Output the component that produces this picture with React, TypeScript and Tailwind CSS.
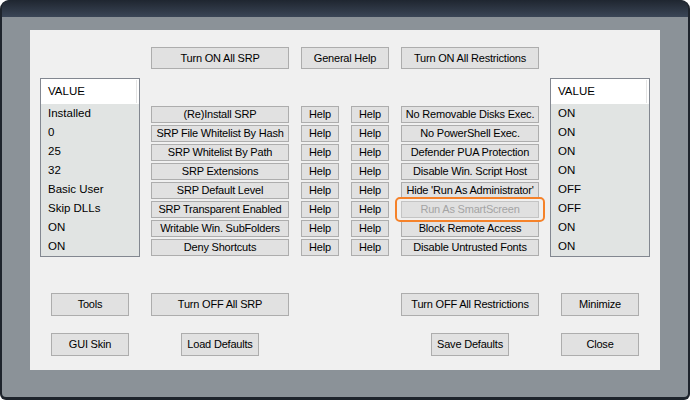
import React from 'react';

const leftValues = ['Installed', '0', '25', '32', 'Basic User', 'Skip DLLs', 'ON', 'ON'];
const rightValues = ['ON', 'ON', 'ON', 'ON', 'OFF', 'OFF', 'ON', 'ON'];

const srpButtons = [
  '(Re)Install SRP',
  'SRP File Whitelist By Hash',
  'SRP Whitelist By Path',
  'SRP Extensions',
  'SRP Default Level',
  'SRP Transparent Enabled',
  'Writable Win. SubFolders',
  'Deny Shortcuts',
];

const restrictionButtons = [
  'No Removable Disks Exec.',
  'No PowerShell Exec.',
  'Defender PUA Protection',
  'Disable Win. Script Host',
  "Hide  'Run As Administrator'",
  'Run As SmartScreen',
  'Block Remote Access',
  'Disable Untrusted Fonts',
];

const WinButton: React.FC<{ label: string; className?: string; disabled?: boolean }> = ({ label, className = '', disabled }) => (
  <button
    className={`flex items-center justify-center border whitespace-nowrap text-[11px] tracking-[-0.2px] leading-none ${
      disabled ? 'bg-[#e0e0e0] border-[#c4c4c4] text-[#a4a4a4]' : 'bg-[#e1e1e1] border-[#adadad] text-black'
    } ${className}`}
  >
    {label}
  </button>
);

const ValueList: React.FC<{ values: string[] }> = ({ values }) => (
  <div className="w-[100px] h-[179px] border border-[#828790] bg-[#e1e4e3] flex flex-col">
    <div className="h-[25px] bg-white flex items-center pl-[7px] relative text-[11.5px] text-black">
      VALUE
      <div className="absolute right-[2px] top-[1px] bottom-[1px] w-px bg-[#e5e5e5]"></div>
    </div>
    {values.map((v, i) => (
      <div key={i} className="h-[19px] flex items-center pl-[7px] text-[11.5px] text-black">
        {v}
      </div>
    ))}
  </div>
);

export default function App() {
  return (
    <div
      className="w-[690px] h-[400px] bg-[#1e242c] rounded-t-[9px] rounded-b-[6px] flex flex-col overflow-hidden"
      style={{ fontFamily: '"Liberation Sans", Arial, sans-serif' }}
    >
      {/* Title strip */}
      <div className="h-[17px] mx-[2px] mt-0 rounded-t-[8px] bg-gradient-to-b from-[#1f2630] to-[#3b4657]"></div>

      {/* Frame body */}
      <div className="flex-1 mx-[2px] mb-[3px] bg-[#8b9298] rounded-b-[4px] pt-[13px] pl-[28px]">
        <div className="w-[630px] h-[340px] bg-[#f0f0f0] pt-[17px]">
          {/* Top row */}
          <div className="flex pl-[121px] gap-[12px]">
            <WinButton label="Turn ON All SRP" className="w-[138px] h-[22px]" />
            <WinButton label="General Help" className="w-[88px] h-[22px]" />
            <WinButton label="Turn ON All Restrictions" className="w-[138px] h-[22px]" />
          </div>

          {/* Middle */}
          <div className="flex pl-[10px] mt-[9px]">
            <ValueList values={leftValues} />
            <div className="ml-[11px] mt-[28px] flex gap-[12px]">
              <div className="flex flex-col gap-[2px]">
                {srpButtons.map((b) => (
                  <WinButton key={b} label={b} className="w-[138px] h-[17px]" />
                ))}
              </div>
              <div className="flex flex-col gap-[2px]">
                {srpButtons.map((b) => (
                  <WinButton key={b} label="Help" className="w-[38px] h-[17px]" />
                ))}
              </div>
              <div className="flex flex-col gap-[2px]">
                {srpButtons.map((b) => (
                  <WinButton key={b} label="Help" className="w-[38px] h-[17px]" />
                ))}
              </div>
              <div className="flex flex-col gap-[2px]">
                {restrictionButtons.map((b, i) =>
                  i === 5 ? (
                    <div key={b} className="relative">
                      <WinButton label={b} disabled className="w-[138px] h-[17px]" />
                      <div className="absolute -left-[6px] -right-[6px] -top-[4px] -bottom-[4px] border-2 border-[#f5822a] rounded-[5px]"></div>
                    </div>
                  ) : (
                    <WinButton key={b} label={b} className="w-[138px] h-[17px]" />
                  )
                )}
              </div>
            </div>
            <div className="ml-[11px]">
              <ValueList values={rightValues} />
            </div>
          </div>

          {/* Bottom rows */}
          <div className="flex pl-[21px] mt-[36px]">
            <WinButton label="Tools" className="w-[78px] h-[23px]" />
            <WinButton label="Turn OFF All SRP" className="ml-[22px] w-[138px] h-[23px]" />
            <WinButton label="Turn OFF All Restrictions" className="ml-[112px] w-[138px] h-[23px]" />
            <WinButton label="Minimize" className="ml-[22px] w-[78px] h-[23px]" />
          </div>
          <div className="flex pl-[21px] mt-[17px]">
            <WinButton label="GUI Skin" className="w-[78px] h-[23px]" />
            <WinButton label="Load Defaults" className="ml-[52px] w-[78px] h-[23px]" />
            <WinButton label="Save Defaults" className="ml-[172px] w-[78px] h-[23px]" />
            <WinButton label="Close" className="ml-[52px] w-[78px] h-[23px]" />
          </div>
        </div>
      </div>
    </div>
  );
}
